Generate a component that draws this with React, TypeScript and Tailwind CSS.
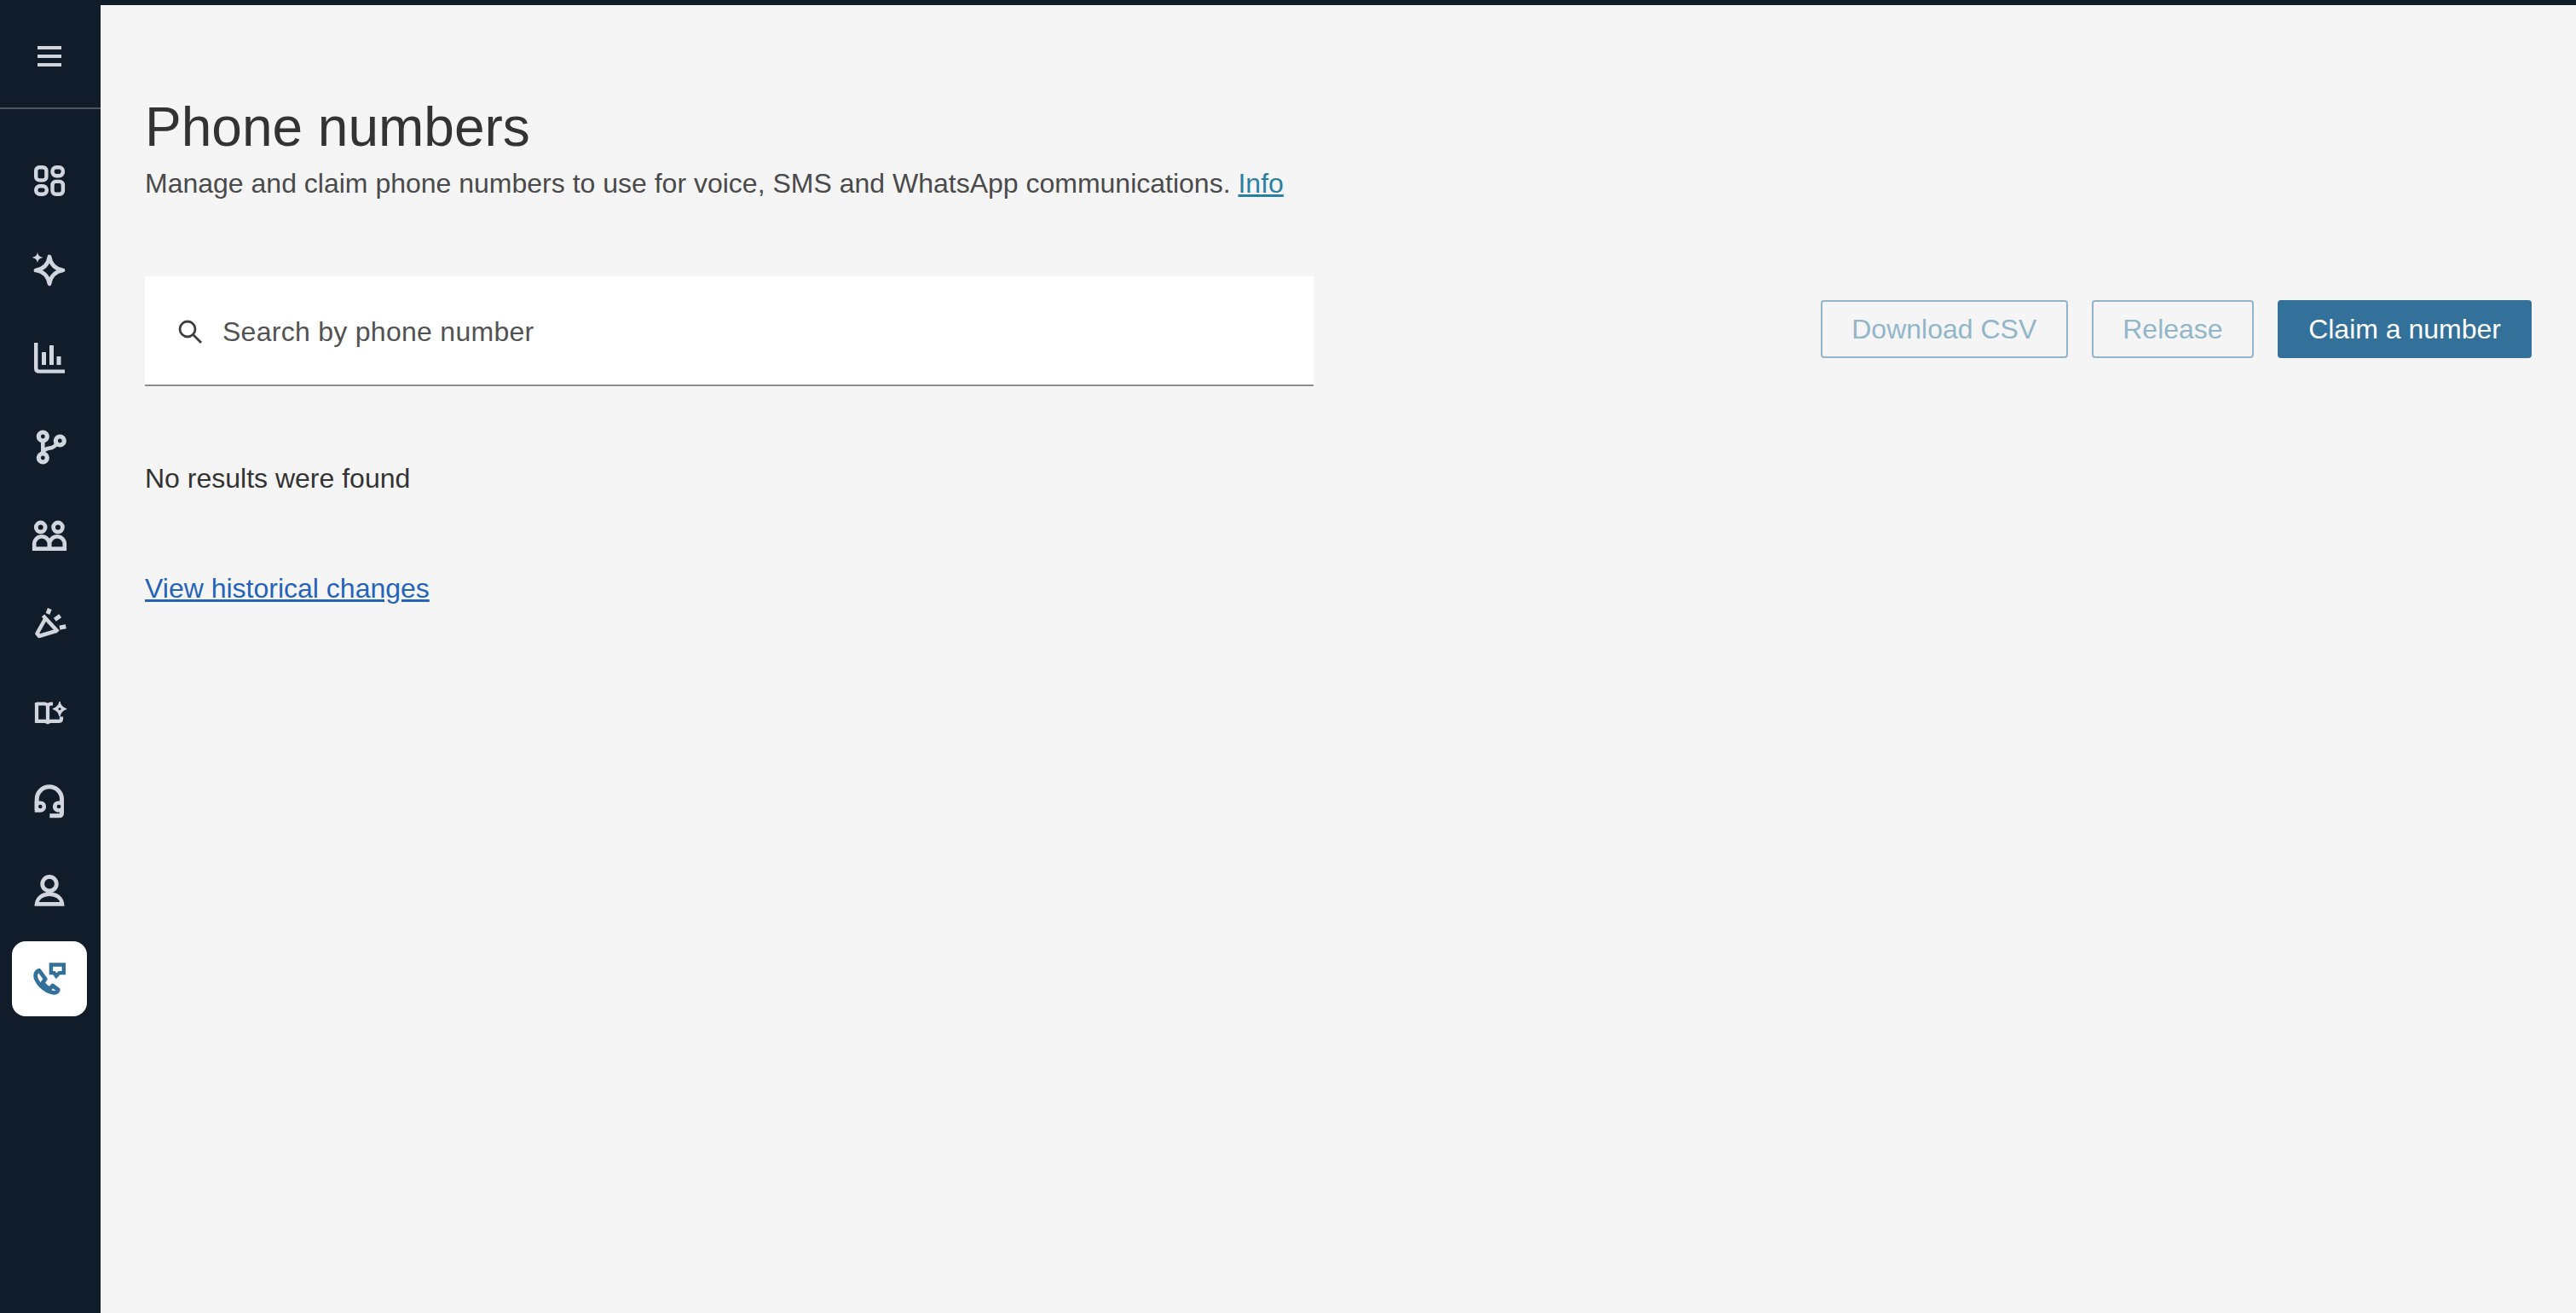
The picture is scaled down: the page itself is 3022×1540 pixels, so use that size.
import React from "react";

const Icon = ({ children, color = "#d1d5dd" }: { children: React.ReactNode; color?: string }) => (
  <svg width="48" height="48" viewBox="-1 0 48 48" fill="none" stroke={color} strokeWidth="4.6" className="block">
    {children}
  </svg>
);

const DashboardIcon = () => (
  <Icon>
    <rect x="7.2" y="8.2" width="12.2" height="15.2" rx="4" strokeWidth="4.4" />
    <rect x="26.5" y="8.2" width="12.4" height="10" rx="4.6" strokeWidth="4.4" />
    <rect x="7.2" y="30.2" width="12.6" height="9.6" rx="4.6" strokeWidth="4.4" />
    <rect x="26.5" y="24.9" width="12.4" height="14.9" rx="4" strokeWidth="4.4" />
  </Icon>
);
const SparkleIcon = () => (
  <Icon>
    <path d="M23 9 C24.5 18.5 29.5 23.5 39 25 C29.5 26.5 24.5 31.5 23 41 C21.5 31.5 16.5 26.5 7 25 C16.5 23.5 21.5 18.5 23 9 Z" strokeLinejoin="round" strokeWidth="4.8" />
    <path d="M9 3.5 C9.6 7.5 11 9 15.5 10 C11 11 9.6 12.5 9 16.5 C8.4 12.5 7 11 2.5 10 C7 9 8.4 7.5 9 3.5 Z" fill="#d1d5dd" stroke="none" />
  </Icon>
);
const ChartIcon = () => (
  <Icon>
    <path d="M7.2 6 V36 Q7.2 39.6 10.8 39.6 H41" strokeWidth="4.4" />
    <path d="M14 17 H19 V32 H14 Z M23 9 H28 V32 H23 Z M31.5 22 H36.5 V32 H31.5 Z" fill="#d1d5dd" stroke="none" />
  </Icon>
);
const BranchIcon = () => (
  <Icon>
    <circle cx="15.3" cy="12" r="5" strokeWidth="5.2" />
    <circle cx="35.3" cy="17" r="5" strokeWidth="5.2" />
    <circle cx="15.3" cy="37" r="5" strokeWidth="5.2" />
    <path d="M15.3 16 V33 M15.5 30 C18 25.5 23 26 26 25 C28 24.3 30 22.5 31 21" strokeWidth="4.6" />
  </Icon>
);
const UsersIcon = () => (
  <Icon>
    <circle cx="12.7" cy="14.4" r="5.4" strokeWidth="4.8" />
    <circle cx="33" cy="14.4" r="5.4" strokeWidth="4.8" />
    <path d="M5.2 39.6 V34 A8.8 8.8 0 0 1 22.8 34 V39.6 Z M23.2 39.6 V34 A8.8 8.8 0 0 1 40.8 34 V39.6 Z" strokeWidth="4.6" />
  </Icon>
);
const MegaphoneIcon = () => (
  <Icon>
    <path d="M15.5 14 L33 33" strokeWidth="4.6" />
    <path d="M18 18 L8.5 35 L11 38 L31 32" strokeWidth="4.6" strokeLinejoin="round" />
    <path d="M23.3 6 L21 12 M35.7 14.3 L29.3 18.7 M42.3 26.7 L35 28.3" strokeWidth="5" />
  </Icon>
);
const BookIcon = () => (
  <Icon>
    <path d="M8 13.5 H17.5 C19.5 13.5 21 15 21 17 V35 M21 17 C21 14.8 23 13.5 25 13.5 H27 M8 12 V33.8 H18 L21 35.2 L24 33.8 H34.5 Q37 33.8 37 31 V28.5" strokeWidth="4.2" />
    <path d="M35 11 C35.8 15 38.5 18 42.8 19.5 C38.5 21 35.8 24 35 28 C34.2 24 31.5 21 27.2 19.5 C31.5 18 34.2 15 35 11 Z" fill="#d1d5dd" stroke="#d1d5dd" strokeWidth="1.2" strokeLinejoin="round" />
    <circle cx="35" cy="19.5" r="1.5" fill="#111c2b" stroke="none" />
  </Icon>
);
const HeadsetIcon = () => (
  <Icon>
    <path d="M8.2 34 V21.5 A14.65 14.65 0 0 1 37.5 21.5 V37.5 Q37.5 40.8 34.5 40.8 H23.3" strokeWidth="5" />
    <path d="M5.7 23.4 H12.5 A6.65 6.65 0 0 1 12.5 36.7 H5.7 Z M40 23.4 H33.5 A6.65 6.65 0 0 0 33.5 36.7 H40 Z" fill="#d1d5dd" stroke="none" />
    <circle cx="12.3" cy="30" r="2.3" fill="#111c2b" stroke="none" />
    <circle cx="34" cy="30" r="2.3" fill="#111c2b" stroke="none" />
  </Icon>
);
const PersonIcon = () => (
  <Icon>
    <circle cx="23" cy="16.7" r="8.3" strokeWidth="4.8" />
    <path d="M8 40.4 C8.7 33 15 28.6 23 28.6 C31 28.6 37.3 33 38 40.4 Z" strokeWidth="4.6" />
  </Icon>
);
const PhoneMsgIcon = () => (
  <Icon color="#33709a">
    <path d="M24.9 7.5 H39.8 V17.1 H34.5 L31 20.8 L28.5 17.1 H24.9 Z" strokeWidth="4.4" />
    <path d="M11 14.3 L18.3 24.3 L15 28.7 C17 31.5 20.5 34.5 23.3 36 L26.7 32 L33.3 37 C33 39 30.5 40.5 28.3 40.3 C17 39 6 27 6.7 19.3 C7 17 9 15 11 14.3 Z" strokeWidth="4.8" strokeLinejoin="round" />
  </Icon>
);

const navIcons = [DashboardIcon, SparkleIcon, ChartIcon, BranchIcon, UsersIcon, MegaphoneIcon, BookIcon, HeadsetIcon, PersonIcon];

export default function App() {
  return (
    <div className="flex h-[1540px] w-[3022px] flex-col overflow-hidden bg-[#111c2b] font-['Liberation_Sans',Arial,sans-serif]">
      <div className="h-[6px] shrink-0 bg-[#111c2b]" />
      <div className="flex min-h-0 flex-1">
        <aside className="flex w-[118px] shrink-0 flex-col bg-[#111c2b]">
          <div className="flex h-[122px] shrink-0 flex-col items-center justify-center gap-[6px] border-b-2 border-[#50555f] pr-[2px]">
            <span className="h-[4px] w-[28px] bg-[#d1d5dd]" />
            <span className="h-[4px] w-[28px] bg-[#d1d5dd]" />
            <span className="h-[4px] w-[28px] bg-[#d1d5dd]" />
          </div>
          <nav className="flex flex-col items-start gap-[16px] pl-[14px] pt-[40px]">
            {navIcons.map((I, i) => (
              <div key={i} className="flex h-[88px] w-[88px] items-center justify-center">
                <I />
              </div>
            ))}
            <div className="flex h-[88px] w-[88px] items-center justify-center rounded-[16px] bg-white">
              <PhoneMsgIcon />
            </div>
          </nav>
        </aside>
        <main className="flex-1 bg-[#f5f5f5] pl-[52px] pr-[52px] pt-[103px]">
          <h1 className="text-[64px] leading-[80px] font-normal text-[#333333]">Phone numbers</h1>
          <p className="mt-[2px] text-[32px] leading-[48px] text-[#4a4a4a]">
            Manage and claim phone numbers to use for voice, SMS and WhatsApp communications.{" "}
            <a href="#" className="text-[#2a7fa5] underline">Info</a>
          </p>
          <div className="mt-[85px] flex items-center justify-between">
            <div className="flex h-[129px] w-[1371px] items-center gap-[23px] border-b-2 border-[#8d8d8d] bg-white pl-[38px] pt-[3px]">
              <svg width="30" height="30" viewBox="0 0 30 30" fill="none" stroke="#3f3f3f" strokeWidth="2.8" className="shrink-0">
                <circle cx="12" cy="12" r="9" />
                <path d="M18.5 18.5 L28 28" />
              </svg>
              <input
                placeholder="Search by phone number"
                className="w-full bg-transparent text-[32px] tracking-[0.28px] text-[#525252] outline-none placeholder:text-[#525252]"
              />
            </div>
            <div className="flex items-center gap-[28px] pb-[6px]">
              <button className="h-[68px] rounded-[4px] border-2 border-[#93b5c9] px-[34.5px] text-[32px] text-[#93b5c9]">Download CSV</button>
              <button className="h-[68px] rounded-[4px] border-2 border-[#93b5c9] px-[34.5px] text-[32px] text-[#93b5c9]">Release</button>
              <button className="h-[68px] rounded-[4px] bg-[#33709a] px-[36px] text-[32px] text-white">Claim a number</button>
            </div>
          </div>
          <p className="mt-[88px] text-[32px] leading-[40px] text-[#333333]">No results were found</p>
          <p className="mt-[89px] text-[32px] leading-[40px]">
            <a href="#" className="text-[#2563b8] underline">View historical changes</a>
          </p>
        </main>
      </div>
    </div>
  );
}
